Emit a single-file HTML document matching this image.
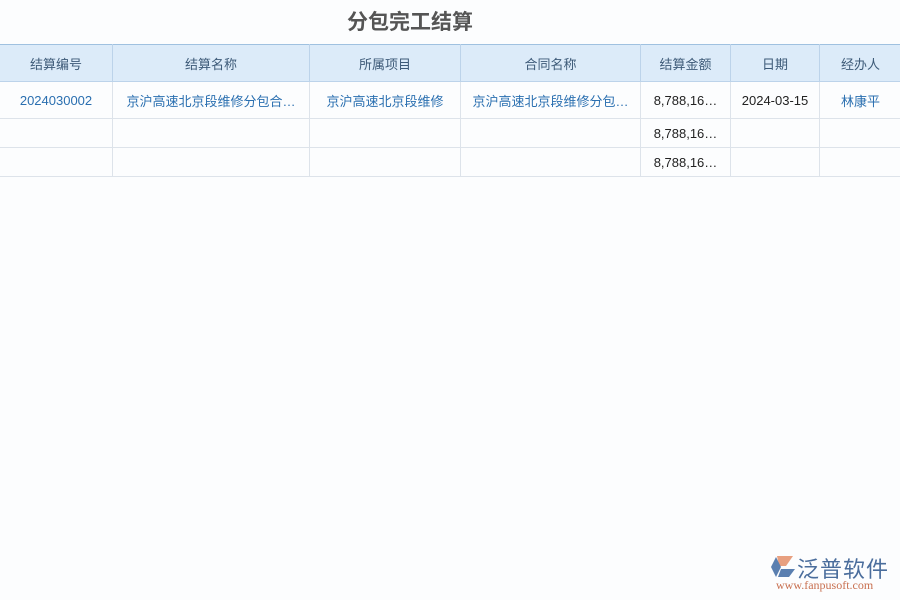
<!DOCTYPE html><html><head><meta charset="utf-8"><style>
body{margin:0;width:900px;height:600px;background:#fcfdfe;font-family:"Liberation Sans","Noto Sans CJK SC",sans-serif;position:relative;overflow:hidden}
.t{position:absolute;left:0;width:820px;top:6px;text-align:center;font-size:21px;font-weight:bold;color:#555}
table{position:absolute;top:44px;left:-1px;border-collapse:collapse;table-layout:fixed;width:902px;font-size:13px}
td,th{border:1px solid #dde3ea;text-align:center;white-space:nowrap;overflow:hidden;padding:0 6px}
th{background:#dcebf9;font-weight:normal;color:#3d5a78;height:36px;border-color:#bcd3ea}
tr.h th{border-top:1px solid #9fc1e0}
td{height:28px;color:#222}
tr.r1 td{height:36px}
.b{color:#2a6fb0}
</style></head><body>
<div class="t">分包完工结算</div>
<table>
<colgroup><col style="width:113px"><col style="width:197px"><col style="width:151px"><col style="width:180px"><col style="width:90px"><col style="width:89px"><col style="width:82px"></colgroup>
<tr class="h"><th>结算编号</th><th>结算名称</th><th>所属项目</th><th>合同名称</th><th>结算金额</th><th>日期</th><th>经办人</th></tr>
<tr class="r1"><td class="b">2024030002</td><td class="b">京沪高速北京段维修分包合…</td><td class="b">京沪高速北京段维修</td><td class="b">京沪高速北京段维修分包…</td><td>8,788,16…</td><td>2024-03-15</td><td class="b">林康平</td></tr>
<tr><td></td><td></td><td></td><td></td><td>8,788,16…</td><td></td><td></td></tr>
<tr><td></td><td></td><td></td><td></td><td>8,788,16…</td><td></td><td></td></tr>
</table>
<div style="position:absolute;left:769px;top:555px;width:28px;height:24px">
<svg width="28" height="24"><path d="M8 1h16l-7 10H10z" fill="#e8a080"/><path d="M2 12l5-10 5 10-5 10z" fill="#5a7fb0"/><path d="M12 14h14l-6 8H9z" fill="#5a7fb0"/></svg></div>
<div style="position:absolute;left:797px;top:552px;font-size:22px;color:#4a6d9c;letter-spacing:1px">泛普软件</div>
<div style="position:absolute;left:776px;top:578px;font-size:12px;color:#c87050;font-family:'Liberation Serif',serif">www.fanpusoft.com</div>
</body></html>
